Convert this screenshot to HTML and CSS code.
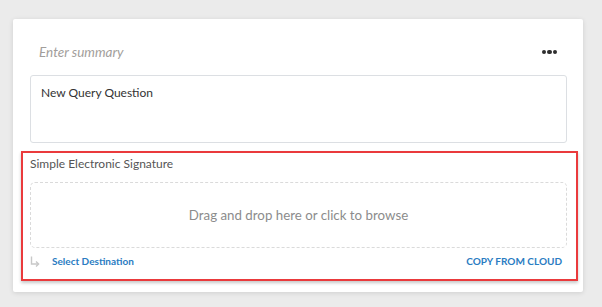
FILE: index.html
```html
<!DOCTYPE html>
<html lang="en">
<head>
    <meta charset="UTF-8">
    <title>Query</title>
    <link rel="stylesheet" href="styles.css">
</head>
<body>
    <div class="card">
        <div class="card-header">
            <span class="summary">Enter summary</span>
            <span class="more"><i></i><i></i><i></i></span>
        </div>
        <div class="question">New Query Question</div>

        <div class="signature">
            <div class="sig-label">Simple Electronic Signature</div>
            <div class="dropzone">Drag and drop here or click to browse</div>
            <div class="sig-actions">
                <span class="dest">
                    <svg width="10" height="11" viewBox="0 0 10 11">
                        <path d="M1.5 0.5 V8 H8" fill="none" stroke="#c8c8c8" stroke-width="1.4"/>
                        <path d="M6 5.5 L8.6 8 L6 10.5" fill="none" stroke="#c8c8c8" stroke-width="1.4"/>
                    </svg>
                    <a href="#">Select Destination</a>
                </span>
                <a href="#" class="cloud">COPY FROM CLOUD</a>
            </div>
        </div>
    </div>
</body>
</html>
```

FILE: styles.css
```css
body {
    margin: 0;
    background: #ebebeb;
    font-family: Lato, 'Open Sans', Arial, sans-serif;
    height: 307px;
    overflow: hidden;
}

.card {
    margin: 19px 0 0 13px;
    width: 570px;
    height: 273px;
    box-sizing: border-box;
    padding: 0 16px 0 17px;
    background: #fff;
    border-radius: 2px;
    box-shadow: 0 1px 5px rgba(0,0,0,0.12);
}

.card-header {
    display: flex;
    align-items: center;
    justify-content: space-between;
    height: 30px;
    padding-top: 18px;
}

.summary {
    padding-left: 9px;
    font-size: 13.5px;
    font-style: italic;
    color: #a29e9b;
}

.more {
    display: flex;
    gap: 1px;
    margin-right: 10px;
}

.more i {
    width: 4.5px;
    height: 4.5px;
    border-radius: 50%;
    background: #2e2e2e;
}

.question {
    margin-top: 8px;
    height: 68px;
    box-sizing: border-box;
    padding: 9px 10px;
    border: 1px solid #dcdfe3;
    border-radius: 3px;
    font-size: 12px;
    color: #333;
}

.signature {
    margin: 8px -11px 0 -9px;
    padding: 3px 9px 11px 7px;
    border: 2px solid #ea3a3c;
    box-shadow: 0 2px 3px rgba(0,0,0,0.22);
}

.sig-label {
    font-size: 12px;
    line-height: 15px;
    color: #555;
}

.dropzone {
    display: flex;
    align-items: center;
    justify-content: center;
    margin-top: 11px;
    height: 66px;
    box-sizing: border-box;
    border: 1.5px dashed #dadada;
    border-radius: 5px;
    font-size: 13.3px;
    color: #8c8c8c;
}

.sig-actions {
    display: flex;
    align-items: center;
    justify-content: space-between;
    margin-top: 6px;
    padding-right: 5px;
    font-size: 10px;
    line-height: 14px;
    font-weight: bold;
}

.dest {
    display: flex;
    align-items: center;
    gap: 12px;
}

.sig-actions a {
    color: #2a7cc2;
    text-decoration: none;
}
```
